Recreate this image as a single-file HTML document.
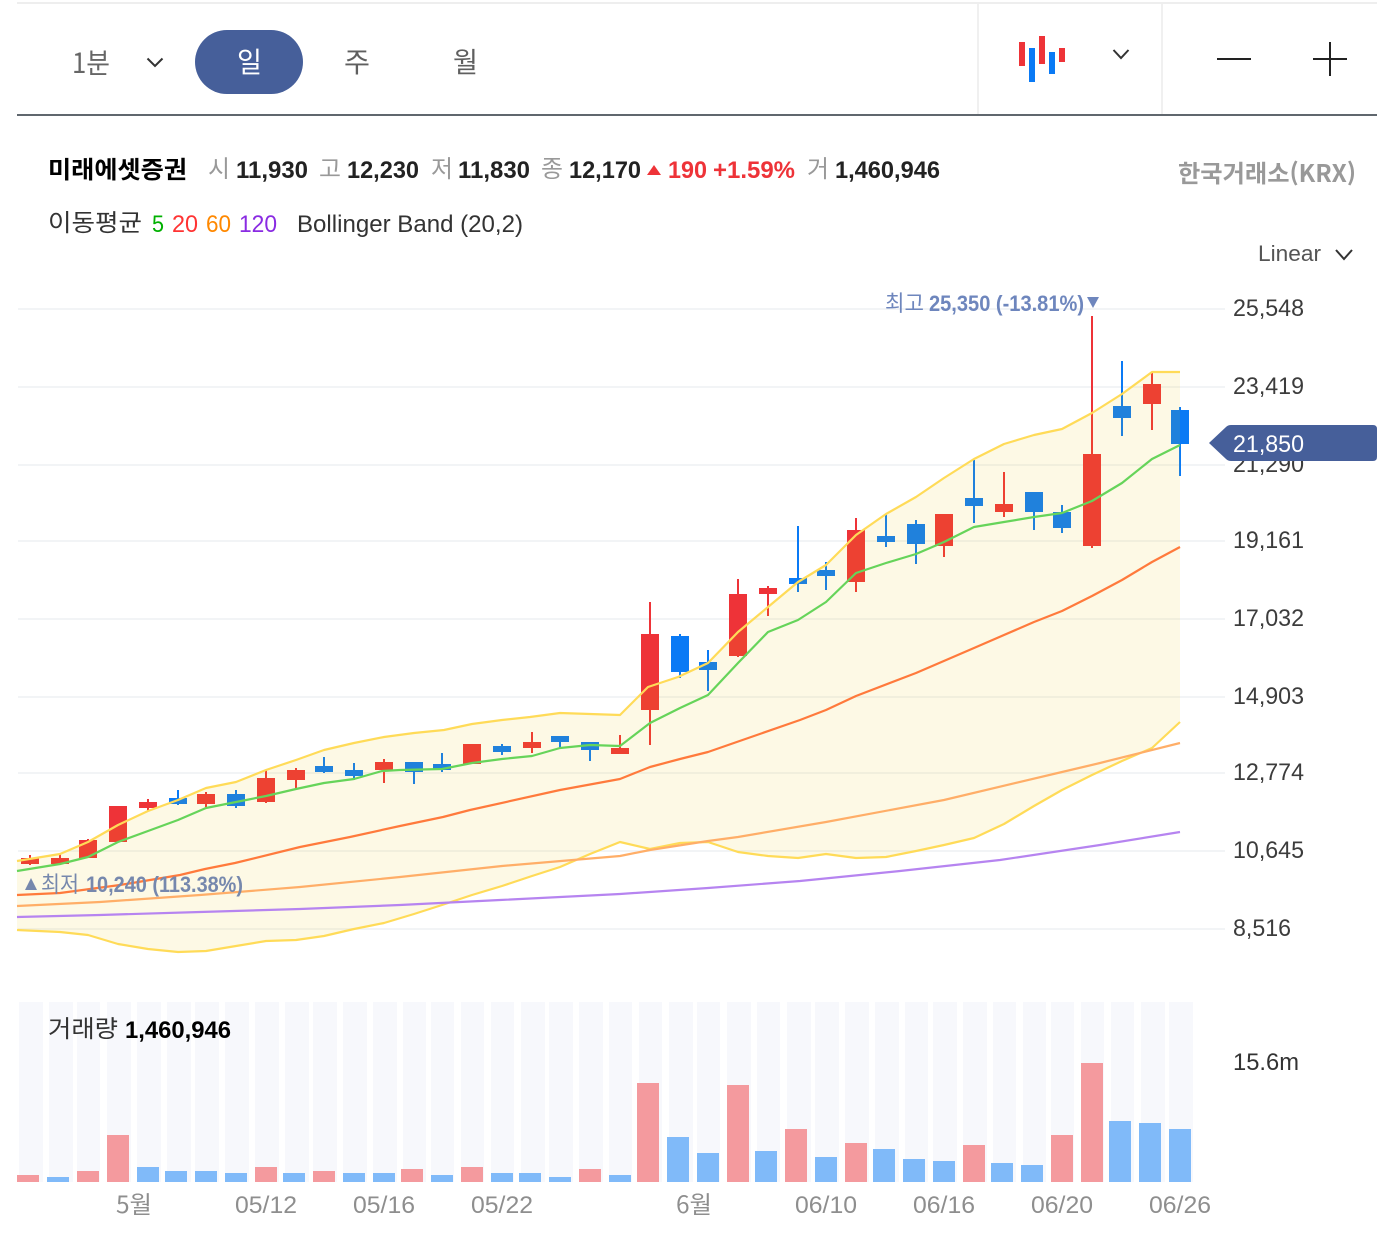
<!DOCTYPE html>
<html lang="ko">
<head>
<meta charset="utf-8">
<title>차트</title>
<style>
html,body{margin:0;padding:0;background:#fff;width:1397px;height:1248px;overflow:hidden}
svg{display:block;font-family:"Liberation Sans","Noto Sans CJK KR",sans-serif}
.k{font-family:"Noto Sans CJK KR","Liberation Sans",sans-serif}
text{white-space:pre}
</style>
</head>
<body>
<svg width="1397" height="1248" viewBox="0 0 1397 1248" xmlns="http://www.w3.org/2000/svg">
<!-- toolbar -->
<rect x="17" y="2" width="1360" height="2" fill="#eeeeee"/>
<rect x="17" y="114" width="1360" height="2" fill="#60676e"/>
<rect x="977" y="4" width="2" height="110" fill="#f0f0f0"/>
<rect x="1161" y="4" width="2" height="110" fill="#f0f0f0"/>
<text class="k" x="72" y="73" font-size="28" fill="#666" textLength="38" lengthAdjust="spacingAndGlyphs">1분</text>
<path d="M147.500 58.500L155 66L162.500 58.500" fill="none" stroke="#333" stroke-width="2"/>
<rect x="195" y="30" width="108" height="64" rx="32" fill="#465f9a"/>
<text class="k" x="237" y="72" font-size="28" fill="#fff" textLength="25" lengthAdjust="spacingAndGlyphs">일</text>
<text class="k" x="344" y="72" font-size="28" fill="#5f5f5f" textLength="26" lengthAdjust="spacingAndGlyphs">주</text>
<text class="k" x="453" y="72" font-size="28" fill="#5f5f5f" textLength="25" lengthAdjust="spacingAndGlyphs">월</text>
<path d="M1019 42h6v24h-6zM1039 36h6v28h-6zM1059 48h6v14h-6z" fill="#ee3338"/>
<path d="M1029 48h6v34h-6zM1049 52h6v22h-6z" fill="#0a7af5"/>
<path d="M1113.500 50L1121 58L1128.500 50" fill="none" stroke="#333" stroke-width="2"/>
<rect x="1217" y="58" width="34" height="2" fill="#222"/>
<rect x="1313" y="58" width="34" height="2" fill="#222"/>
<rect x="1329" y="42" width="2" height="34" fill="#222"/>

<!-- info row -->
<text class="k" x="48" y="178" font-size="24" font-weight="700" fill="#000" textLength="139" lengthAdjust="spacingAndGlyphs">미래에셋증권</text>
<g font-size="24" fill="#999">
<text class="k" x="208" y="177" textLength="22" lengthAdjust="spacingAndGlyphs">시</text>
<text class="k" x="319" y="177" textLength="22" lengthAdjust="spacingAndGlyphs">고</text>
<text class="k" x="431" y="177" textLength="22" lengthAdjust="spacingAndGlyphs">저</text>
<text class="k" x="541" y="177" textLength="22" lengthAdjust="spacingAndGlyphs">종</text>
<text class="k" x="807" y="177" textLength="22" lengthAdjust="spacingAndGlyphs">거</text>
</g>
<g font-size="24" font-weight="700" fill="#222">
<text x="236" y="178" textLength="72" lengthAdjust="spacingAndGlyphs">11,930</text>
<text x="347" y="178" textLength="72" lengthAdjust="spacingAndGlyphs">12,230</text>
<text x="458" y="178" textLength="72" lengthAdjust="spacingAndGlyphs">11,830</text>
<text x="569" y="178" textLength="72" lengthAdjust="spacingAndGlyphs">12,170</text>
<text x="835" y="178" textLength="105" lengthAdjust="spacingAndGlyphs">1,460,946</text>
</g>
<path d="M647 175L654 165L661 175z" fill="#ee3338"/>
<g font-size="24" font-weight="700" fill="#ee3338">
<text x="668" y="178" textLength="39" lengthAdjust="spacingAndGlyphs">190</text>
<text x="713" y="178" textLength="82" lengthAdjust="spacingAndGlyphs">+1.59%</text>
</g>
<text class="k" x="1178" y="182" font-size="24" font-weight="700" fill="#999" textLength="178" lengthAdjust="spacingAndGlyphs">한국거래소(KRX)</text>

<text class="k" x="48" y="231" font-size="24" fill="#333" textLength="94" lengthAdjust="spacingAndGlyphs">이동평균</text>
<text x="152" y="232" font-size="24" fill="#00b000" textLength="12" lengthAdjust="spacingAndGlyphs">5</text>
<text x="172" y="232" font-size="24" fill="#ff3333" textLength="26" lengthAdjust="spacingAndGlyphs">20</text>
<text x="206" y="232" font-size="24" fill="#ff8800" textLength="25" lengthAdjust="spacingAndGlyphs">60</text>
<text x="239" y="232" font-size="24" fill="#8a2be2" textLength="38" lengthAdjust="spacingAndGlyphs">120</text>
<text x="297" y="232" font-size="24" fill="#333" textLength="226" lengthAdjust="spacingAndGlyphs">Bollinger Band (20,2)</text>
<text x="1258" y="261" font-size="22" fill="#555" textLength="63" lengthAdjust="spacingAndGlyphs">Linear</text>
<path d="M1336 250L1344 259L1352 250" fill="none" stroke="#333" stroke-width="2"/>

<!-- grid -->
<path d="M18 309H1225M18 387H1225M18 465H1225M18 541H1225M18 619H1225M18 697H1225M18 773H1225M18 851H1225M18 929H1225" stroke="#f2f4f6" stroke-width="2" fill="none"/>

<!-- candles -->
<path fill="#ee3338" d="M21 858h18v6h-18zM29 855h2v10h-2zM51 858h18v6h-18zM59 853h2v11h-2zM79 840h18v18h-18zM87 839h2v2h-2zM109 806h18v36h-18zM139 802h18v6h-18zM147 799h2v12h-2zM197 794h18v10h-18zM205 792h2v15h-2zM257 778h18v24h-18zM265 770h2v33h-2zM287 770h18v10h-18zM295 768h2v20h-2zM375 762h18v8h-18zM383 759h2v24h-2zM463 744h18v20h-18zM523 742h18v6h-18zM531 732h2v21h-2zM611 748h18v6h-18zM619 735h2v15h-2zM641 634h18v76h-18zM649 602h2v143h-2zM729 594h18v62h-18zM737 579h2v78h-2zM759 588h18v6h-18zM767 586h2v30h-2zM847 530h18v52h-18zM855 518h2v74h-2zM935 514h18v32h-18zM943 540h2v17h-2zM995 504h18v8h-18zM1003 472h2v45h-2zM1083 454h18v92h-18zM1091 316h2v232h-2zM1143 384h18v20h-18zM1151 372h2v58h-2z"/>
<path fill="#0a7af5" d="M169 798h18v6h-18zM177 790h2v15h-2zM227 794h18v12h-18zM235 790h2v18h-2zM315 766h18v6h-18zM323 757h2v16h-2zM345 770h18v6h-18zM353 763h2v17h-2zM405 762h18v10h-18zM413 762h2v22h-2zM433 764h18v6h-18zM441 753h2v19h-2zM493 746h18v6h-18zM501 744h2v11h-2zM551 736h18v6h-18zM559 736h2v13h-2zM581 742h18v8h-18zM589 742h2v19h-2zM671 636h18v36h-18zM679 634h2v44h-2zM699 662h18v8h-18zM707 650h2v41h-2zM789 578h18v6h-18zM797 526h2v66h-2zM817 570h18v6h-18zM825 562h2v28h-2zM877 536h18v6h-18zM885 514h2v33h-2zM907 524h18v20h-18zM915 520h2v44h-2zM965 498h18v8h-18zM973 460h2v63h-2zM1025 492h18v20h-18zM1033 492h2v38h-2zM1053 512h18v16h-18zM1061 505h2v28h-2zM1113 406h18v12h-18zM1121 361h2v75h-2zM1171 410h18v34h-18zM1179 407h2v69h-2z"/>

<!-- bollinger fill -->
<polygon fill="rgb(240,195,0)" fill-opacity="0.1" points="17,861 60,854 88,842 118,825 148,811 178,800 206,788 236,782 266,770 296,760 324,750 354,743 384,737 414,733 444,730 472,724 502,720 530,717 560,713 590,714 620,715 648,687 678,677 708,663 738,632 768,607 798,582 826,565 856,535 886,514 916,497 944,478 974,459 1004,444 1034,435 1062,429 1092,413 1122,394 1152,372 1180,372 1180,722 1152,748 1122,761 1092,775 1062,790 1034,806 1004,824 974,838 944,845 916,851 886,857 856,858 826,854 798,858 768,856 738,852 708,842 680,843 650,849 620,842 590,854 560,867 532,876 502,886 472,895 442,905 414,914 384,923 354,929 324,936 296,940 266,941 236,946 206,951 178,952 148,949 118,944 88,935 60,932 17,930"/>

<!-- lines -->
<g fill="none" stroke-width="2.2" stroke-linejoin="round">
<polyline stroke="#ffdb58" points="17,861 60,854 88,842 118,825 148,811 178,800 206,788 236,782 266,770 296,760 324,750 354,743 384,737 414,733 444,730 472,724 502,720 530,717 560,713 590,714 620,715 648,687 678,677 708,663 738,632 768,607 798,582 826,565 856,535 886,514 916,497 944,478 974,459 1004,444 1034,435 1062,429 1092,413 1122,394 1152,372 1180,372"/>
<polyline stroke="#ffdb58" points="17,930 60,932 88,935 118,944 148,949 178,952 206,951 236,946 266,941 296,940 324,936 354,929 384,923 414,914 442,905 472,895 502,886 532,876 560,867 590,854 620,842 650,849 680,843 708,842 738,852 768,856 798,858 826,854 856,858 886,857 916,851 944,845 974,838 1004,824 1034,806 1062,790 1092,775 1122,761 1152,748 1180,722"/>
<polyline stroke="#b684f0" points="17,917 100,915 200,912 300,909 400,905 500,900 620,894 708,888 800,881 900,871 1000,860 1100,845 1180,832"/>
<polyline stroke="#ffae68" points="17,906 100,902 200,895 300,887 400,877 502,866 620,856 650,850 708,841 738,837 826,822 944,800 1062,772 1100,763 1180,743"/>
<polyline stroke="#ff7a3c" points="17,895 60,893 90,889 120,885 150,880 180,875 205,869 235,863 300,847 350,837 400,826 443,817 470,810 560,790 620,779 650,767 680,759 708,752 800,720 826,710 856,696 916,673 974,648 1034,622 1062,611 1092,596 1122,580 1152,562 1180,547"/>
<polyline stroke="#66d45a" points="17,871 60,864 88,857 118,842 148,831 178,820 206,808 236,802 266,796 296,789 324,783 354,779 382,771 400,770 442,769 472,763 502,759 532,756 560,748 590,745 620,746 650,723 680,708 708,695 738,663 768,632 798,620 826,602 856,573 886,563 916,554 944,542 974,527 1004,522 1034,517 1062,513 1092,501 1122,483 1152,459 1180,445"/>
</g>

<!-- high/low labels -->
<g fill="#6e86bd" font-size="22">
<text class="k" x="885" y="311" textLength="39" lengthAdjust="spacingAndGlyphs">최고</text>
<text x="929" y="311" font-weight="700" textLength="155" lengthAdjust="spacingAndGlyphs">25,350 (-13.81%)</text>
<path d="M1087 297h12l-6 11z"/>
</g>
<g fill="#7688ad" font-size="22">
<path d="M25 890L31 878L37 890z"/>
<text class="k" x="41" y="892" textLength="38" lengthAdjust="spacingAndGlyphs">최저</text>
<text x="86" y="892" font-weight="700" textLength="157" lengthAdjust="spacingAndGlyphs">10,240 (113.38%)</text>
</g>

<!-- y axis -->
<g font-size="24" fill="#3c3c3c">
<text x="1233" y="316" textLength="71" lengthAdjust="spacingAndGlyphs">25,548</text>
<text x="1233" y="394" textLength="71" lengthAdjust="spacingAndGlyphs">23,419</text>
<text x="1233" y="472" textLength="71" lengthAdjust="spacingAndGlyphs">21,290</text>
<text x="1233" y="548" textLength="71" lengthAdjust="spacingAndGlyphs">19,161</text>
<text x="1233" y="626" textLength="71" lengthAdjust="spacingAndGlyphs">17,032</text>
<text x="1233" y="704" textLength="71" lengthAdjust="spacingAndGlyphs">14,903</text>
<text x="1233" y="780" textLength="71" lengthAdjust="spacingAndGlyphs">12,774</text>
<text x="1233" y="858" textLength="71" lengthAdjust="spacingAndGlyphs">10,645</text>
<text x="1233" y="936" textLength="58" lengthAdjust="spacingAndGlyphs">8,516</text>
</g>
<path d="M1209 443L1226 427Q1228 425 1231 425H1373Q1377 425 1377 429V457Q1377 461 1373 461H1231Q1228 461 1226 459z" fill="#465f9a"/>
<text x="1233" y="452" font-size="24" fill="#fff" textLength="71" lengthAdjust="spacingAndGlyphs">21,850</text>

<!-- volume backgrounds -->
<path fill="#f7f8fc" d="M19 1002h24v180h-24zM49 1002h24v180h-24zM77 1002h23v180h-23zM107 1002h24v180h-24zM137 1002h24v180h-24zM167 1002h24v180h-24zM195 1002h24v180h-24zM225 1002h24v180h-24zM255 1002h24v180h-24zM285 1002h24v180h-24zM313 1002h24v180h-24zM343 1002h24v180h-24zM373 1002h24v180h-24zM403 1002h23v180h-23zM431 1002h23v180h-23zM461 1002h23v180h-23zM491 1002h23v180h-23zM521 1002h24v180h-24zM549 1002h24v180h-24zM579 1002h24v180h-24zM609 1002h23v180h-23zM639 1002h23v180h-23zM669 1002h24v180h-24zM697 1002h23v180h-23zM727 1002h24v180h-24zM757 1002h23v180h-23zM787 1002h24v180h-24zM815 1002h24v180h-24zM845 1002h24v180h-24zM875 1002h24v180h-24zM905 1002h23v180h-23zM933 1002h24v180h-24zM963 1002h24v180h-24zM993 1002h23v180h-23zM1023 1002h23v180h-23zM1051 1002h23v180h-23zM1081 1002h23v180h-23zM1111 1002h23v180h-23zM1141 1002h24v180h-24zM1169 1002h24v180h-24z"/>
<path fill="#f49a9e" d="M17 1175h22v7h-22zM77 1171h22v11h-22zM107 1135h22v47h-22zM255 1167h22v15h-22zM313 1171h22v11h-22zM401 1169h22v13h-22zM461 1167h22v15h-22zM579 1169h22v13h-22zM637 1083h22v99h-22zM727 1085h22v97h-22zM785 1129h22v53h-22zM845 1143h22v39h-22zM963 1145h22v37h-22zM1051 1135h22v47h-22zM1081 1063h22v119h-22z"/>
<path fill="#80baf9" d="M47 1177h22v5h-22zM137 1167h22v15h-22zM165 1171h22v11h-22zM195 1171h22v11h-22zM225 1173h22v9h-22zM283 1173h22v9h-22zM343 1173h22v9h-22zM373 1173h22v9h-22zM431 1175h22v7h-22zM491 1173h22v9h-22zM519 1173h22v9h-22zM549 1177h22v5h-22zM609 1175h22v7h-22zM667 1137h22v45h-22zM697 1153h22v29h-22zM755 1151h22v31h-22zM815 1157h22v25h-22zM873 1149h22v33h-22zM903 1159h22v23h-22zM933 1161h22v21h-22zM991 1163h22v19h-22zM1021 1165h22v17h-22zM1109 1121h22v61h-22zM1139 1123h22v59h-22zM1169 1129h22v53h-22z"/>
<text class="k" x="48" y="1037" font-size="24" fill="#333" textLength="70" lengthAdjust="spacingAndGlyphs">거래량</text>
<text x="125" y="1038" font-size="24" font-weight="700" fill="#000" textLength="106" lengthAdjust="spacingAndGlyphs">1,460,946</text>
<text x="1233" y="1070" font-size="24" fill="#333" textLength="66" lengthAdjust="spacingAndGlyphs">15.6m</text>

<!-- x axis -->
<g font-size="24" fill="#8e8e8e">
<text class="k" x="116" y="1213" textLength="36" lengthAdjust="spacingAndGlyphs">5월</text>
<text x="235" y="1213" textLength="62" lengthAdjust="spacingAndGlyphs">05/12</text>
<text x="353" y="1213" textLength="62" lengthAdjust="spacingAndGlyphs">05/16</text>
<text x="471" y="1213" textLength="62" lengthAdjust="spacingAndGlyphs">05/22</text>
<text class="k" x="676" y="1213" textLength="36" lengthAdjust="spacingAndGlyphs">6월</text>
<text x="795" y="1213" textLength="62" lengthAdjust="spacingAndGlyphs">06/10</text>
<text x="913" y="1213" textLength="62" lengthAdjust="spacingAndGlyphs">06/16</text>
<text x="1031" y="1213" textLength="62" lengthAdjust="spacingAndGlyphs">06/20</text>
<text x="1149" y="1213" textLength="62" lengthAdjust="spacingAndGlyphs">06/26</text>
</g>
</svg>
</body>
</html>
